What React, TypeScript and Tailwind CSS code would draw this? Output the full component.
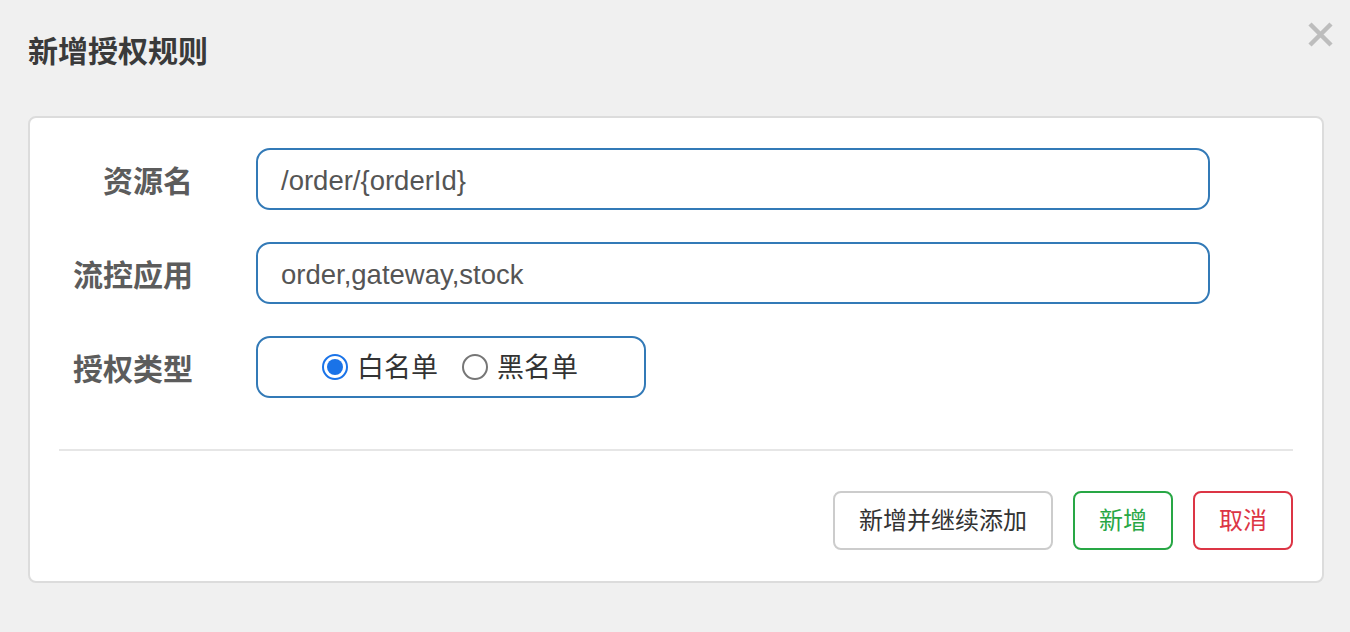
import { useState } from "react"

const font = { fontFamily: '"Liberation Sans", "Noto Sans CJK SC", sans-serif' }

const Radio = ({ checked, label, onClick }: { checked: boolean; label: string; onClick: () => void }) => (
  <button type="button" onClick={onClick} className="flex items-center gap-[9px]">
    {checked ? (
      <span className="w-[26px] h-[26px] rounded-full border-[2px] border-[#1a73e8] flex items-center justify-center">
        <span className="w-[16px] h-[16px] rounded-full bg-[#1a73e8]" />
      </span>
    ) : (
      <span className="w-[26px] h-[26px] rounded-full border-[2px] border-[#767676] bg-white" />
    )}
    <span className="text-[27px] text-[#333] leading-none pt-[2px]">{label}</span>
  </button>
)

const Row = ({ label, children }: { label: string; children: React.ReactNode }) => (
  <div className="flex items-center">
    <div className="w-[134px] pt-[6px] text-right text-[30px] font-bold text-[#5c5c5c] leading-none">{label}</div>
    <div className="ml-[63px]">{children}</div>
  </div>
)

export default function App() {
  const [type, setType] = useState(0)
  return (
    <div className="min-h-screen bg-[#f0f0f0] relative px-[28px] pb-[40px]" style={font}>
      <button type="button" className="absolute top-[22px] right-[17px] w-[25px] h-[25px]">
        <svg viewBox="0 0 25 25" width="25" height="25">
          <path d="M2 2 L23 23 M23 2 L2 23" stroke="#bdbdbd" strokeWidth="4.5" strokeLinecap="butt" />
        </svg>
      </button>
      <h1 className="pt-[29px] text-[30px] leading-[45px] font-bold text-[#3a3a3a]">新增授权规则</h1>
      <div className="mt-[42px] w-[1296px] bg-white border-[2px] border-[#dcdcdc] rounded-[8px] px-[29px] pt-[30px] pb-[31px]">
        <div className="flex flex-col gap-[32px]">
          <Row label="资源名">
            <div className="w-[954px] h-[62px] border-[2px] border-[#337ab7] rounded-[14px] flex items-center px-[23px] pt-[3px] text-[27.5px] text-[#555]">
              /order/{"{orderId}"}
            </div>
          </Row>
          <Row label="流控应用">
            <div className="w-[954px] h-[62px] border-[2px] border-[#337ab7] rounded-[14px] flex items-center px-[23px] pt-[3px] text-[27.5px] text-[#555]">
              order,gateway,stock
            </div>
          </Row>
          <Row label="授权类型">
            <div className="w-[390px] h-[62px] border-[2px] border-[#337ab7] rounded-[14px] flex items-center justify-center gap-[24px] pr-[2px]">
              <Radio checked={type === 0} label="白名单" onClick={() => setType(0)} />
              <Radio checked={type === 1} label="黑名单" onClick={() => setType(1)} />
            </div>
          </Row>
        </div>
        <div className="mt-[51px] h-[2px] bg-[#e6e6e6]" />
        <div className="mt-[40px] flex justify-end gap-[20px]">
          <button type="button" className="w-[220px] h-[59px] border-[2px] border-[#cccccc] rounded-[8px] text-[24px] text-[#333]">
            新增并继续添加
          </button>
          <button type="button" className="w-[100px] h-[59px] border-[2px] border-[#28a745] rounded-[8px] text-[24px] text-[#28a745]">
            新增
          </button>
          <button type="button" className="w-[100px] h-[59px] border-[2px] border-[#dc3545] rounded-[8px] text-[24px] text-[#dc3545]">
            取消
          </button>
        </div>
      </div>
    </div>
  )
}
